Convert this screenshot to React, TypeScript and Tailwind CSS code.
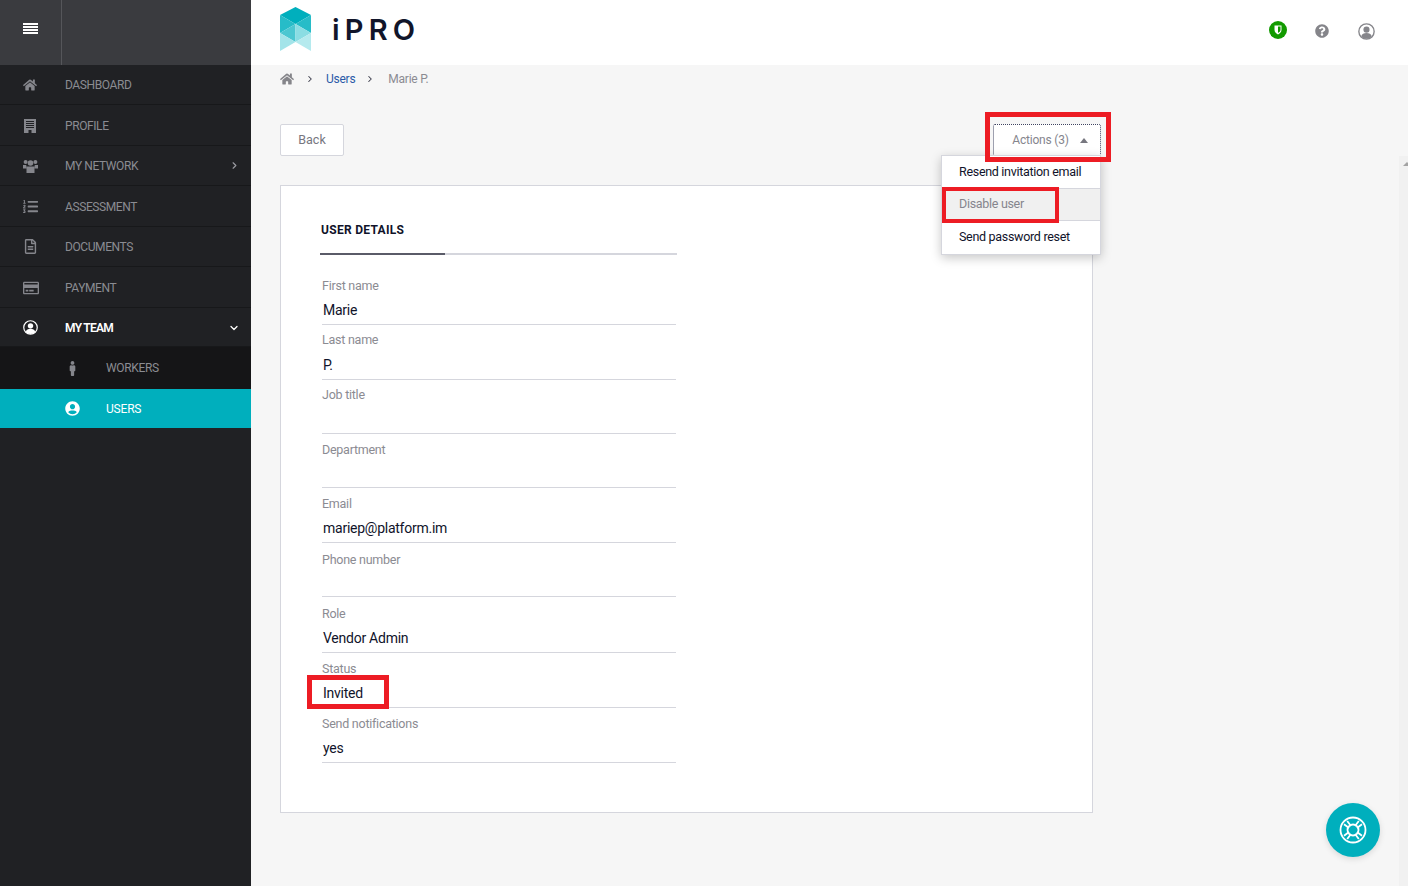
import React from "react";
import { FaHome, FaRegFileAlt, FaRegCreditCard, FaUserCircle, FaMale, FaQuestionCircle, FaListOl } from "react-icons/fa";
import { ChevronRight, ChevronDown } from "lucide-react";

const font = { fontFamily: '"Roboto", "Noto Sans", sans-serif' };

function NavItem({ icon, label, chevron, active, cls }: { icon: React.ReactNode; label: string; chevron?: React.ReactNode; active?: boolean; cls: string }) {
  return (
    <div className={`flex items-center border-b border-[#17181a] pl-[23px] pr-[11px] text-[12px] ${cls} ${active ? "font-semibold tracking-[-0.7px] text-white" : "tracking-[-0.4px] text-[#8b8c92]"}`}>
      <span className={`flex w-[42px] shrink-0 ${active ? "text-white" : "text-[#85868c]"}`}>{icon}</span>
      <span className="flex-1">{label}</span>
      {chevron}
    </div>
  );
}

function Field({ label, value, cls }: { label: string; value?: string; cls: string }) {
  return (
    <div className={`flex flex-col border-b border-[#d5d6dd] ${cls}`}>
      <span className="text-[12.5px] leading-[16px] tracking-[-0.25px] text-[#8b8b92]">{label}</span>
      <span className="mt-auto pb-[5px] pl-[1px] text-[14px] leading-[18px] tracking-[-0.25px] text-[#10132a]">{value}</span>
    </div>
  );
}

function Logo() {
  return (
    <svg width="33" height="45" viewBox="0 0 33 45" className="shrink-0">
      <polygon points="16.500,0 32,8 16.500,17 1,8" fill="#00afbd" />
      <polygon points="1,8 16.500,17 1,26" fill="#27bcc8" />
      <polygon points="32,8 16.500,17 32,26" fill="#27bcc8" />
      <polygon points="16.500,17 1,26 16.500,35" fill="#4cc7d1" />
      <polygon points="16.500,17 32,26 16.500,35" fill="#8bdde3" />
      <polygon points="1,26 16.500,35 1,44" fill="#a3e4e9" />
      <polygon points="32,26 16.500,35 32,44" fill="#b5eaee" />
    </svg>
  );
}

function Hamburger() {
  return (
    <svg width="15" height="11" viewBox="0 0 15 11" fill="#fff">
      <rect y="0" width="15" height="2" />
      <rect y="3" width="15" height="2" />
      <rect y="6" width="15" height="2" />
      <rect y="9" width="15" height="2" />
    </svg>
  );
}

function BuildingIcon() {
  return (
    <svg width="12" height="14" viewBox="0 0 12 14">
      <rect width="12" height="14" fill="#85868c" />
      <g fill="#202124">
        <rect x="2" y="2" width="8" height="1" />
        <rect x="2" y="4" width="8" height="1" />
        <rect x="2" y="6" width="8" height="1" />
        <rect x="2" y="8" width="8" height="1" />
        <rect x="4.500" y="11" width="3" height="3" />
      </g>
    </svg>
  );
}

function GroupIcon() {
  return (
    <svg width="15" height="14" viewBox="0 0 15 14" fill="#85868c">
      <circle cx="2.600" cy="3" r="2" />
      <circle cx="12.400" cy="3" r="2" />
      <circle cx="7.500" cy="4" r="2.800" />
      <path d="M0 6h3.200l.6 3.500H0zM15 6h-3.200l-.6 3.500H15z" />
      <path d="M3.500 7.500h8v6.500h-8z" />
    </svg>
  );
}

function UserRing({ size, color }: { size: number; color: string }) {
  return (
    <svg width={size} height={size} viewBox="0 0 20 20">
      <circle cx="10" cy="10" r="9" fill="none" stroke={color} strokeWidth="1.600" />
      <circle cx="10" cy="7.800" r="3.600" fill={color} />
      <path d="M3.800 15.500c.8-2.800 3-3.800 6.200-3.800s5.400 1 6.200 3.800C14.500 17.500 12.500 18.500 10 18.500s-4.500-1-6.200-3z" fill={color} />
    </svg>
  );
}

function RingIcon() {
  return (
    <svg width="28" height="28" viewBox="0 0 28 28" fill="none" stroke="#fff" strokeWidth="1.800">
      <circle cx="14" cy="14" r="12.500" />
      <circle cx="14" cy="14" r="5.500" />
      <path d="M5 8.200 10 12M8.200 5 12 10M23 8.200 18 12M19.800 5 16 10M5 19.800 10 16M8.200 23 12 18M23 19.800 18 16M19.800 23 16 18" />
    </svg>
  );
}

export default function App() {
  return (
    <div className="relative flex h-[886px] w-[1408px] overflow-hidden bg-[#f6f6f6]" style={font}>
      <aside className="flex w-[251px] shrink-0 flex-col bg-[#202124]">
        <div className="flex h-[65px] bg-[#3a3b3f]">
          <div className="flex w-[62px] items-center justify-center border-r border-[#55565a] pb-[8px]">
            <Hamburger />
          </div>
        </div>
        <NavItem cls="h-[40px]" icon={<FaHome className="text-[14px]" />} label="DASHBOARD" />
        <NavItem cls="h-[41px] pt-[1px]" icon={<span className="pl-[1px]"><BuildingIcon /></span>} label="PROFILE" />
        <NavItem cls="h-[40px]" icon={<GroupIcon />} label="MY NETWORK" chevron={<ChevronRight size={11} strokeWidth={2.500} className="text-[#9a9ba1]" />} />
        <NavItem cls="h-[41px] pt-[1px]" icon={<FaListOl className="text-[15px]" />} label="ASSESSMENT" />
        <NavItem cls="h-[40px]" icon={<FaRegFileAlt className="text-[15px]" />} label="DOCUMENTS" />
        <NavItem cls="h-[41px] pt-[1px]" icon={<FaRegCreditCard className="text-[16px]" />} label="PAYMENT" />
        <NavItem active cls="h-[39px] pt-[1px]" icon={<UserRing size={15} color="#fff" />} label="MY TEAM" chevron={<ChevronDown size={12} strokeWidth={2.500} className="text-white" />} />
        <div className="flex h-[42px] items-center bg-[#151517] pl-[65px] text-[12px] tracking-[-0.35px] text-[#8b8c92]">
          <span className="flex w-[41px]"><FaMale className="text-[15px] text-[#85868c]" /></span>
          WORKERS
        </div>
        <div className="flex h-[39px] items-center bg-[#00afbd] pl-[65px] text-[12px] tracking-[-0.2px] text-white">
          <span className="flex w-[41px]"><FaUserCircle className="text-[15px]" /></span>
          USERS
        </div>
      </aside>

      <main className="flex min-w-0 flex-1 flex-col">
        <header className="flex h-[65px] shrink-0 items-center bg-white pb-[6px] pl-[28px] pr-[33px]">
          <Logo />
          <span className="ml-[20px] text-[29px] font-semibold leading-none tracking-[0.18em] text-[#11152a]" style={{ fontFamily: '"Inter", sans-serif' }}>iPRO</span>
          <div className="ml-auto flex items-center">
            <span className="flex h-[18px] w-[18px] items-center justify-center rounded-full bg-[#129a00]">
              <svg width="8" height="10" viewBox="0 0 8 10"><path d="M.5.5h7V5c0 2-2 3.500-3.500 4.500C2.500 8.500.5 7 .5 5z" fill="#fff" /><path d="M4 1.500h2.500V5c0 1.200-1.200 2.200-2.500 3z" fill="#129a00" /></svg>
            </span>
            <FaQuestionCircle className="ml-[28px] mt-[3px] text-[14px] text-[#85858a]" />
            <span className="ml-[29px] mt-[3px] flex"><UserRing size={17} color="#85858a" /></span>
          </div>
        </header>

        <nav className="flex h-[28px] shrink-0 items-center pl-[29px] text-[12px] tracking-[-0.25px]">
          <FaHome className="text-[14px] text-[#85858a]" />
          <ChevronRight size={10} strokeWidth={2.500} className="ml-[11px] text-[#3a3b4a]" />
          <span className="ml-[11px] text-[#2b5aa8]">Users</span>
          <ChevronRight size={10} strokeWidth={2.500} className="ml-[10px] text-[#3a3b4a]" />
          <span className="ml-[13px] text-[#8b8b92]">Marie P.</span>
        </nav>

        <div className="ml-[29px] mt-[31px] flex w-[821px] items-start justify-between">
          <button className="h-[32px] w-[64px] rounded-[2px] border border-[#d5d6dd] bg-white text-[12.5px] text-[#77777f]">Back</button>
          <div className="relative">
            <button className="flex h-[32px] w-[108px] items-center justify-center gap-[11px] rounded-[2px] border border-dotted border-[#3f4360] bg-white pl-[6px] text-[12px] tracking-[-0.2px] text-[#85858d]">
              Actions (3)
              <span className="h-0 w-0 border-x-[4.500px] border-b-[5px] border-x-transparent border-b-[#77777f]" />
            </button>
            <div className="absolute right-0 top-[31px] z-20 flex w-[160px] flex-col border border-[#d5d6dd] bg-white text-[12.500px] tracking-[-0.3px] text-[#10132a] shadow-[0_3px_10px_rgba(0,0,0,0.22)]">
              <div className="flex h-[33px] items-center border-b border-[#d5d6dd] pl-[17px]">Resend invitation email</div>
              <div className="flex h-[32px] items-center border-b border-[#d5d6dd] bg-[#f0f0f0] pl-[17px] text-[#85858d]">Disable user</div>
              <div className="flex h-[33px] items-center pl-[17px]">Send password reset</div>
            </div>
          </div>
        </div>

        <section className="ml-[29px] mt-[29px] flex h-[628px] w-[813px] flex-col border border-[#d5d6dd] bg-white pl-[39px] pt-[35px]">
          <div className="w-[357px]">
            <div className="relative h-[34px] border-b-2 border-[#d5d6dd] pl-[1px] text-[12px] font-bold tracking-[0.3px] text-[#10132a]">
              USER DETAILS
              <span className="absolute bottom-[-2px] left-0 h-[2px] w-[125px] bg-[#5a5b68]" />
            </div>
            <div className="ml-[2px] mt-[15px] flex w-[354px] flex-col">
              <Field cls="h-[55px] pt-[8px]" label="First name" value="Marie" />
              <Field cls="h-[55px] pt-[7px]" label="Last name" value="P." />
              <Field cls="h-[54px] pt-[7px]" label="Job title" />
              <Field cls="h-[54px] pt-[8px]" label="Department" />
              <Field cls="h-[55px] pt-[8px]" label="Email" value="mariep@platform.im" />
              <Field cls="h-[54px] pt-[9px]" label="Phone number" />
              <Field cls="h-[56px] pt-[9px]" label="Role" value="Vendor Admin" />
              <Field cls="h-[55px] pt-[8px]" label="Status" value="Invited" />
              <Field cls="h-[55px] pt-[8px]" label="Send notifications" value="yes" />
            </div>
          </div>
        </section>
      </main>

      <div className="absolute bottom-0 right-0 top-[156px] w-[9px] bg-[#f1f1f1]">
        <span className="absolute left-[4px] top-[6px] h-0 w-0 border-x-[4px] border-b-[4px] border-x-transparent border-b-[#a3a3a3]" />
      </div>

      <div className="absolute left-[1326px] top-[803px] flex h-[54px] w-[54px] items-center justify-center rounded-full bg-[#00afbd] shadow-[0_2px_6px_rgba(0,0,0,0.12)]">
        <RingIcon />
      </div>

      <div className="pointer-events-none absolute left-[985px] top-[112px] z-30 h-[50px] w-[126px] border-[5px] border-[#ed1c24]" />
      <div className="pointer-events-none absolute left-[942px] top-[187px] z-30 h-[36px] w-[117px] border-[4px] border-[#ed1c24]" />
      <div className="pointer-events-none absolute left-[307px] top-[675px] z-30 h-[34px] w-[82px] border-[5px] border-[#ed1c24]" />
    </div>
  );
}
